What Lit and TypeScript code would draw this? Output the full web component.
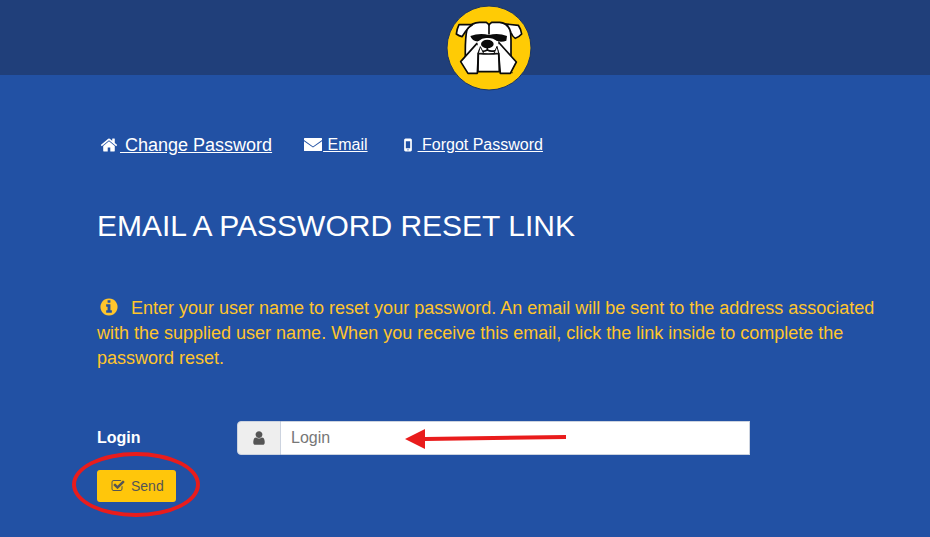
import { LitElement, html, svg, css } from "lit";
import { customElement, property } from "lit/decorators.js";

const ICONS: Record<string, string> = {
  home: "M1472 992v480q0 26-19 45t-45 19h-384v-384h-256v384h-384q-26 0-45-19t-19-45v-480q0-1 .5-3t.5-3l575-474 575 474q1 2 1 6zm223-69l-62 74q-8 9-21 11h-3q-13 0-21-7l-692-577-692 577q-12 8-24 7-13-2-21-11l-62-74q-8-10-7-23.5t11-21.5l719-599q32-26 76-26t76 26l244 204v-195q0-14 9-23t23-9h192q14 0 23 9t9 23v408l219 182q10 8 11 21.5t-7 23.5z",
  envelope: "M60 200H1732q60 0 60 60v150L896 1040 0 410V260q0-60 60-60zM0 530L896 1150 1792 530V1440q0 60-60 60H60q-60 0-60-60z",
  mobile: "M652 256h488q60 0 100 40t40 100v1000q0 60-40 100t-100 40h-488q-60 0-100-40t-40-100v-1000q0-60 40-100t100-40zM680 520v700h432v-700zM896 1310a64 64 0 1 0 0 128a64 64 0 1 0 0-128z",
  info: "M1152 1376v-160q0-14-9-23t-23-9h-96v-512q0-14-9-23t-23-9h-320q-14 0-23 9t-9 23v160q0 14 9 23t23 9h96v320h-96q-14 0-23 9t-9 23v160q0 14 9 23t23 9h448q14 0 23-9t9-23zm-128-896v-160q0-14-9-23t-23-9h-192q-14 0-23 9t-9 23v160q0 14 9 23t23 9h192q14 0 23-9t9-23zm640 416q0 209-103 385.5t-279.5 279.5-385.5 103-385.5-103-279.5-279.5-103-385.5 103-385.5 279.5-279.5 385.5-103 385.5 103 279.5 279.5 103 385.5z",
  user: "M1536 1399q0 109-62.5 187t-150.5 78h-854q-88 0-150.5-78t-62.5-187q0-85 8.5-160.5t31.5-152 58.5-131 94-89 134.5-34.5q131 128 313 128t313-128q76 0 134.5 34.5t94 89 58.5 131 31.5 152 8.5 160.5zm-256-887q0 159-112.5 271.5t-271.5 112.5-271.5-112.5-112.5-271.5 112.5-271.5 271.5-112.5 271.5 112.5 112.5 271.5z",
  check: "M1472 930v318q0 119-84.5 203.5t-203.5 84.5h-832q-119 0-203.5-84.5t-84.5-203.5v-832q0-119 84.5-203.5t203.5-84.5h832q63 0 117 25 15 7 18 23 3 17-9 29l-49 49q-10 10-23 10-3 0-9-2-23-6-45-6h-832q-66 0-113 47t-47 113v832q0 66 47 113t113 47h832q66 0 113-47t47-113v-254q0-13 9-22l64-64q10-10 23-10 6 0 12 3 20 8 20 29zm231-489l-814 814q-24 24-57 24t-57-24l-430-430q-24-24-24-57t24-57l110-110q24-24 57-24t57 24l263 263 647-647q24-24 57-24t57 24l110 110q24 24 24 57t-24 57z",
};

/** A glyph that takes the current text colour and font size. */
@customElement("fa-icon")
class FaIcon extends LitElement {
  @property() name = "home";

  static styles = css`
    :host { display: inline-flex; }
    .glyph { display: block; width: 1em; height: 1em; fill: currentColor; fill-rule: evenodd; }
  `;

  render() {
    return html`<svg class="glyph" viewBox="0 0 1792 1792" aria-hidden="true">
      ${svg`<path d=${ICONS[this.name]} />`}
    </svg>`;
  }
}

/** Round bulldog emblem. */
@customElement("bulldog-logo")
class BulldogLogo extends LitElement {
  static styles = css`
    :host { display: block; width: 88px; height: 88px; }
    .emblem { display: block; width: 100%; height: 100%; }
    .disc { fill: #ffcb05; stroke: #1b3564; stroke-width: 3; }
    .face { fill: #fff; stroke: #0a0a0a; stroke-width: 5; stroke-linejoin: round; }
    .muzzle { fill: #fff; }
    .ink { fill: #0a0a0a; }
    .line { fill: none; stroke: #0a0a0a; stroke-width: 5; stroke-linecap: round; stroke-linejoin: round; }
    .tooth { fill: #fff; stroke: #0a0a0a; stroke-width: 3; stroke-linejoin: round; }
  `;

  render() {
    return html`<svg class="emblem" viewBox="0 0 264 264" role="img" aria-label="Bulldog">
      <circle class="disc" cx="132" cy="132" r="126" />
      <path class="face" d="M66 76 Q80 55 104 55 H124 L132 62 L140 55 H164 Q186 57 195 76 Q198 90 198 108 V158 H61 Q60 104 66 76 Z" />
      <path class="face" d="M42 62 H82 Q68 70 62 82 L51 98 Q42 96 34 90 Q36 74 42 62 Z" />
      <path class="face" d="M182 60 L220 64 Q228 76 230 90 Q222 99 211 103 Q202 97 198 86 Q194 70 182 60 Z" />
      <path class="ink" d="M76 96 Q104 86 132 93 Q160 86 186 96 L184 110 Q172 115 158 112 H102 Q82 114 76 96 Z" />
      <path class="line" d="M132 64 V90" />
      <path class="muzzle" d="M100 112 Q112 101 126 102 Q144 101 157 112 L190 152 H70 Z" />
      <path class="face" d="M96 118 L47 173 L69 208 H97 L100 148 L106 130 Z" />
      <path class="face" d="M160 114 L214 174 L196 208 H166 L161 150 L154 128 Z" />
      <path class="muzzle" d="M97 114 L110 110 L111 140 L102 144 Z M160 112 L148 110 L147 140 L158 144 Z" />
      <path class="face" d="M100 148 Q130 152 161 148 L163 203 H99 Z" />
      <ellipse class="ink" cx="127" cy="120" rx="19" ry="13" />
      <path class="line" d="M127 132 V138 M112 142 Q120 142 127 138 Q138 144 150 140" />
      <path class="tooth" d="M100 148 L106 128 L116 148 Z M147 148 L156 127 L161 148 Z" />
      <circle class="ink" cx="201" cy="206" r="2" />
    </svg>`;
  }
}

@customElement("app-root")
class AppRoot extends LitElement {
  static styles = css`
    :host {
      display: block;
      min-height: 100vh;
      background: #2251a4;
      color: #fff;
      font: 16px/24px "Liberation Sans", Arial, sans-serif;
    }
    * { box-sizing: border-box; }
    .banner {
      height: 75px;
      padding: 4px 48px 0 96px;
      display: flex;
      justify-content: center;
      background: #203f7a;
    }
    .content { padding: 58px 48px 20px 97px; }
    .links { display: flex; align-items: center; }
    .link { display: flex; align-items: center; gap: 1px; color: #fff; text-decoration: none; white-space: pre; }
    .link fa-icon { font-size: 18px; }
    .link span { text-decoration: underline; }
    .home { gap: 2px; font-size: 18px; padding-left: 3px; margin-right: 32px; }
    .email { margin-right: 31px; }
    .title { margin: 49px 0 0; font-size: 30px; line-height: 40px; font-weight: 400; }
    .notice { margin: 50px 0 0; font-size: 18px; line-height: 25px; color: #ffc52c; }
    .notice fa-icon { font-size: 20px; vertical-align: -3px; margin: 0 12px 0 2px; }
    .row { margin-top: 50px; display: grid; grid-template-columns: 140px minmax(0, 513px); align-items: center; }
    .label { font-weight: 700; }
    .group { position: relative; display: flex; height: 34px; }
    .addon {
      width: 44px;
      display: flex;
      align-items: center;
      justify-content: center;
      background: #eee;
      color: #555;
      border: 1px solid #ccd3df;
      border-radius: 4px 0 0 4px;
    }
    .input {
      flex: 1;
      min-width: 0;
      padding: 0 10px;
      font: inherit;
      color: #555;
      background: #fff;
      border: 1px solid #ccd3df;
      border-left: 0;
      border-radius: 0;
      outline: 0;
    }
    .input::placeholder { color: #777; opacity: 1; }
    .arrow { position: absolute; left: 168px; top: 7px; width: 162px; height: 22px; fill: #e91c1c; pointer-events: none; }
    .action { position: relative; display: inline-block; margin-top: 15px; }
    .send {
      display: flex;
      align-items: center;
      gap: 6px;
      height: 32px;
      padding: 0 12px 0 14px;
      font: 14px/20px "Liberation Sans", Arial, sans-serif;
      color: #555;
      background: #ffc60b;
      border: 0;
      border-radius: 3px;
    }
    .ring {
      position: absolute;
      inset: -18px -24px -15px -25px;
      border: 4px solid #e91c1c;
      border-radius: 50%;
      pointer-events: none;
    }
  `;

  render() {
    return html`
      <header class="banner"><bulldog-logo></bulldog-logo></header>
      <main class="content">
        <nav class="links">
          <a class="link home" href="#change"><fa-icon name="home"></fa-icon><span> Change Password</span></a>
          <a class="link email" href="#email"><fa-icon name="envelope"></fa-icon><span> Email</span></a>
          <a class="link" href="#forgot"><fa-icon name="mobile"></fa-icon><span> Forgot Password</span></a>
        </nav>
        <h1 class="title">EMAIL A PASSWORD RESET LINK</h1>
        <p class="notice"><fa-icon name="info"></fa-icon>Enter your user name to reset your password. An email will be sent to the address associated with the supplied user name. When you receive this email, click the link inside to complete the password reset.</p>
        <form @submit=${(e: Event) => e.preventDefault()}>
          <div class="row">
            <label class="label" for="login">Login</label>
            <div class="group">
              <span class="addon"><fa-icon name="user"></fa-icon></span>
              <input class="input" id="login" type="text" placeholder="Login" />
              <svg class="arrow" viewBox="0 0 162 22" aria-hidden="true">
                <path d="M0 11 L20 1 V9 L161 7 V11 L20 13 V21 Z" />
              </svg>
            </div>
          </div>
          <div class="action">
            <button class="send" type="submit"><fa-icon name="check"></fa-icon>Send</button>
            <span class="ring"></span>
          </div>
        </form>
      </main>
    `;
  }
}
